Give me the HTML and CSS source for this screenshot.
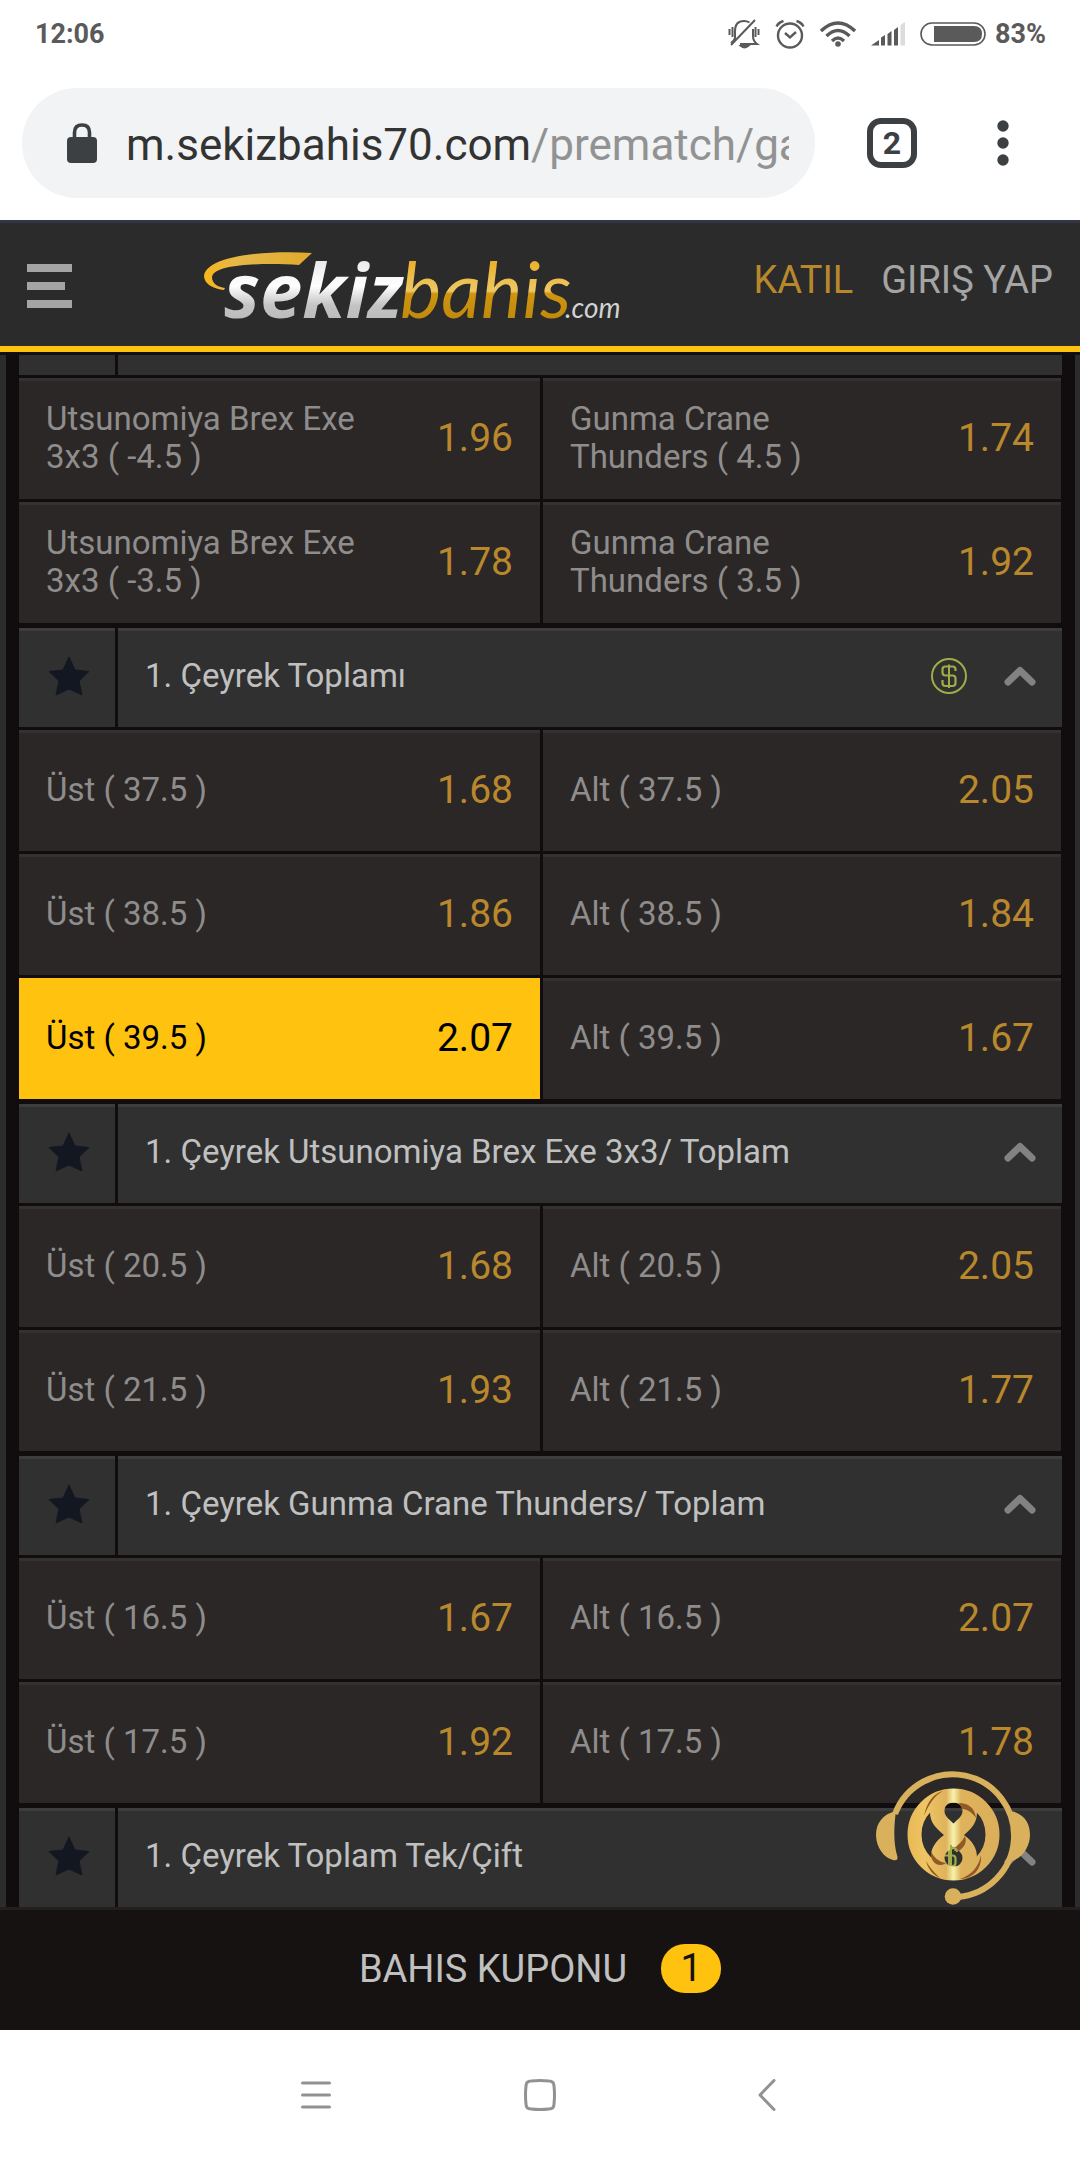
FILE: index.html
```html
<!DOCTYPE html>
<html lang="tr">
<head>
<meta charset="utf-8">
<meta name="viewport" content="width=device-width, initial-scale=1">
<title>sekizbahis.com</title>
<link rel="stylesheet" href="styles.css">
</head>
<body>
<svg class="defs" aria-hidden="true">
  <symbol id="star" viewBox="0 0 42 40"><path d="M21 1 27 14 41 15.500 31 25 34 39 21 33 8 39 11 25 1 15.500 15 14Z" fill="#131722" stroke="#131722" stroke-linejoin="round"/></symbol>
  <symbol id="up" viewBox="0 0 32 20"><path d="M4 16 16 4.500 28 16" fill="none" stroke="#828282" stroke-width="7" stroke-linecap="round" stroke-linejoin="round"/></symbol>
  <symbol id="cash" viewBox="0 0 36 36"><g fill="none" stroke="#a0ac47"><circle cx="18" cy="18" r="17" stroke-width="2"/><path stroke-width="2" d="M18 6.500V30"/><path stroke-width="2.200" d="M24.500 13V11.500Q24.500 8.500 21.500 8.500H14.500Q11.500 8.500 11.500 11.500V14.500Q11.500 17.500 14.500 17.500H21.500Q24.500 17.500 24.500 20.500V25Q24.500 28 21.500 28H14.500Q11.500 28 11.500 25V22"/></g></symbol>
</svg>

<div class="status">
  <span class="status__text">12:06</span>
  <div class="status__icons">
    <svg width="32" height="30" viewBox="0 0 32 30" fill="none" stroke="#5a5a5a" stroke-width="2"><path d="M7 21V12Q7 2 16 2Q19 2 21.500 3.500M12 25H29Q25 22 25 17V10M1.500 10V16M4.500 8V18M27.500 8V18M30.500 10V16M3 26 27 1"/><path d="M3 24Q6 22 7 19"/><path d="M13 27H20Q16.500 30 13 27Z" fill="#5a5a5a"/></svg>
    <svg width="30" height="30" viewBox="0 0 30 30" fill="none" stroke="#5a5a5a" stroke-width="2.400"><circle cx="15" cy="16.500" r="12"/><path d="M10 14 15 18.500 21 13M1.500 7.500Q3.500 3.500 8.500 2M28.500 7.500Q26.500 3.500 21.500 2"/></svg>
    <svg width="36" height="28" viewBox="0 0 36 28" fill="none" stroke="#5a5a5a" stroke-width="3.400"><path d="M1 11Q18-5 35 11M6.500 16Q18 5 29.500 16M12 21Q18 15 24 21"/><circle cx="18" cy="24" r="2.800" fill="#5a5a5a" stroke="none"/></svg>
    <svg width="34" height="24" viewBox="0 0 34 24" fill="#5a5a5a"><path d="M0 23.500 8 18V23.500ZM10 15.500 14 13V23.500H10ZM16.500 12 20.500 9V23.500H16.500ZM23 8 27 5V23.500H23Z"/><path d="M29.500 3 34 0V23.500H29.500Z" fill="#dcdcdc"/></svg>
    <svg class="battery" width="66" height="24" viewBox="0 0 66 24"><rect x="1" y="1" width="64" height="22" rx="11" fill="#fff" stroke="#5a5a5a" stroke-width="1.600"/><path d="M14 4H54Q62 4 62 12T54 20H14Z" fill="#5a5a5a"/></svg>
    <span class="status__text">83%</span>
  </div>
</div>

<div class="browser">
  <button class="address" aria-label="Adres">
    <svg width="30" height="40" viewBox="0 0 30 40"><rect y="14" width="30" height="26" rx="4" fill="#3c4043"/><path d="M7.500 16V9.500Q7.500 2 15 2T22.500 9.500V16" fill="none" stroke="#3c4043" stroke-width="3.600"/></svg>
    <span class="address__url">m.sekizbahis70.com<span class="address__path">/prematch/ga</span></span>
  </button>
  <button class="tabs" aria-label="Sekmeler">2</button>
  <button class="more" aria-label="Menü"><svg width="12" height="46" viewBox="0 0 12 46" fill="#3c4043"><circle cx="6" cy="6" r="5.700"/><circle cx="6" cy="23" r="5.700"/><circle cx="6" cy="40" r="5.700"/></svg></button>
</div>

<header class="site">
  <button class="site__menu" aria-label="Menü"><i></i><i></i><i></i></button>
  <a class="site__logo" href="#" aria-label="sekizbahis.com">
    <svg width="430" height="76" viewBox="0 0 430 76">
      <defs>
        <linearGradient id="silver" gradientUnits="userSpaceOnUse" x1="0" y1="4" x2="0" y2="68"><stop offset="0" stop-color="#e4e4e4"/><stop offset=".5" stop-color="#fff"/><stop offset=".8" stop-color="#c4c4c4"/><stop offset="1" stop-color="#bcbcbc"/></linearGradient>
        <linearGradient id="gold" gradientUnits="userSpaceOnUse" x1="0" y1="4" x2="0" y2="68"><stop offset="0" stop-color="#e9ab1c"/><stop offset=".58" stop-color="#eec765"/><stop offset=".62" stop-color="#cf950f"/><stop offset="1" stop-color="#c08a0c"/></linearGradient>
        <linearGradient id="swoosh" x1="0" x2="1"><stop offset="0" stop-color="#f8b51a"/><stop offset=".3" stop-color="#e5b849"/><stop offset="1" stop-color="#e0a92b"/></linearGradient>
      </defs>
      <path d="M108 3 95 15C65 13 10 13 8 27C8 34 14 37 21 38L20 40C10 39 0 34 0 26C2 6 60 0 108 3Z" fill="url(#swoosh)"/>
      <text class="logo-strong" x="20" y="68" fill="url(#silver)">sekiz</text>
      <text class="logo-light" x="196" y="68" fill="url(#gold)">bahis</text>
      <text class="logo-com" x="361" y="68" fill="#d2d2d2">.com</text>
    </svg>
  </a>
  <nav class="site__links"><a class="site__join" href="#">KATIL</a><a href="#">GIRIŞ YAP</a></nav>
</header>

<main class="market">
  <div class="market__list">
    <section class="group">
      <div class="bar bar--cut"><span class="bar__star"></span><span class="bar__title"></span></div>
      <div class="odds">
        <button class="odd"><span>Utsunomiya Brex Exe 3x3 ( -4.5 )</span><b>1.96</b></button>
        <button class="odd"><span>Gunma Crane Thunders ( 4.5 )</span><b>1.74</b></button>
        <button class="odd"><span>Utsunomiya Brex Exe 3x3 ( -3.5 )</span><b>1.78</b></button>
        <button class="odd"><span>Gunma Crane Thunders ( 3.5 )</span><b>1.92</b></button>
      </div>
    </section>
    <section class="group">
      <div class="bar">
        <button class="bar__star" aria-label="Favori"><svg width="42" height="40"><use href="#star"/></svg></button>
        <button class="bar__title"><span>1. Çeyrek Toplamı</span><svg width="36" height="36"><use href="#cash"/></svg><svg width="32" height="20"><use href="#up"/></svg></button>
      </div>
      <div class="odds">
        <button class="odd"><span>Üst ( 37.5 )</span><b>1.68</b></button>
        <button class="odd"><span>Alt ( 37.5 )</span><b>2.05</b></button>
        <button class="odd"><span>Üst ( 38.5 )</span><b>1.86</b></button>
        <button class="odd"><span>Alt ( 38.5 )</span><b>1.84</b></button>
        <button class="odd odd--picked" aria-pressed="true"><span>Üst ( 39.5 )</span><b>2.07</b></button>
        <button class="odd"><span>Alt ( 39.5 )</span><b>1.67</b></button>
      </div>
    </section>
    <section class="group">
      <div class="bar">
        <button class="bar__star" aria-label="Favori"><svg width="42" height="40"><use href="#star"/></svg></button>
        <button class="bar__title"><span>1. Çeyrek Utsunomiya Brex Exe 3x3/ Toplam</span><svg width="32" height="20"><use href="#up"/></svg></button>
      </div>
      <div class="odds">
        <button class="odd"><span>Üst ( 20.5 )</span><b>1.68</b></button>
        <button class="odd"><span>Alt ( 20.5 )</span><b>2.05</b></button>
        <button class="odd"><span>Üst ( 21.5 )</span><b>1.93</b></button>
        <button class="odd"><span>Alt ( 21.5 )</span><b>1.77</b></button>
      </div>
    </section>
    <section class="group">
      <div class="bar">
        <button class="bar__star" aria-label="Favori"><svg width="42" height="40"><use href="#star"/></svg></button>
        <button class="bar__title"><span>1. Çeyrek Gunma Crane Thunders/ Toplam</span><svg width="32" height="20"><use href="#up"/></svg></button>
      </div>
      <div class="odds">
        <button class="odd"><span>Üst ( 16.5 )</span><b>1.67</b></button>
        <button class="odd"><span>Alt ( 16.5 )</span><b>2.07</b></button>
        <button class="odd"><span>Üst ( 17.5 )</span><b>1.92</b></button>
        <button class="odd"><span>Alt ( 17.5 )</span><b>1.78</b></button>
      </div>
    </section>
    <section class="group">
      <div class="bar">
        <button class="bar__star" aria-label="Favori"><svg width="42" height="40"><use href="#star"/></svg></button>
        <button class="bar__title"><span>1. Çeyrek Toplam Tek/Çift</span><svg width="36" height="36"><use href="#cash"/></svg><svg width="32" height="20"><use href="#up"/></svg></button>
      </div>
    </section>
  </div>
  <button class="support" aria-label="Canlı destek">
    <svg width="154" height="136" viewBox="0 0 154 136">
      <defs>
        <linearGradient id="shine" gradientUnits="userSpaceOnUse" x1="31" y1="0" x2="124" y2="0"><stop offset="0" stop-color="#e8b956"/><stop offset=".2" stop-color="#efc563"/><stop offset=".42" stop-color="#dfb25c"/><stop offset=".5" stop-color="#f7f2ab"/><stop offset=".58" stop-color="#dfb25c"/><stop offset="1" stop-color="#dbae5a"/></linearGradient>
      </defs>
      <path d="M19 43A61.500 61.500 0 1 1 82 126" fill="none" stroke="#d9b15c" stroke-width="6"/>
      <circle cx="77" cy="125.500" r="8.300" fill="#d9b15c"/>
      <path d="M20 40C7 43 0 52 0 64S8 87 17 89Q22 90 21.500 86C17 72 18 54 20 40ZM135 40C148 43 154 52 154 64S146 87 136 90C137 72 137 55 135 40Z" fill="#d9b15c"/>
      <circle cx="77.500" cy="63.500" r="39" fill="none" stroke="url(#shine)" stroke-width="14"/>
      <path d="M77.500 18.500C62 18.500 54 29 54 41C54 52 60 57 68 64C60 70 55 76 55 87C55 100 65 108.500 77.500 108.500S101 100 101 87C101 76 96 70 88 64C96 57 101 52 101 41C101 29 93 18.500 77.500 18.500ZM77.500 31.500C83 31.500 86.500 35 86.500 40S82 48 77.500 52.500C73 48 68.500 45 68.500 40S72 31.500 77.500 31.500ZM77.500 78A9 9 0 1 1 77.500 96A9 9 0 1 1 77.500 78Z" fill="url(#shine)" fill-rule="evenodd"/>
      <g fill="#8f5a25"><path d="M67 20C57 23 51 31 48 45C53 33 58 25 67 20ZM83 32C92 32 99 37 100 47C95 40 90 38 86 38ZM89 65C86 71 82 74 77 78L83 80C89 75 91 71 89 65ZM55 80C58 87 63 91 70 92C63 97 57 92 55 86ZM105 84C103 95 96 104 84 108C97 108 106 98 105 84ZM50 90C52 98 57 104 64 107C58 101 53 96 50 90Z"/></g>
      <path d="M75 74V94M81 81Q81 76.500 75 76.500" fill="none" stroke="#a0ac47" stroke-width="2"/>
    </svg>
  </button>
</main>

<button class="coupon"><span>BAHIS KUPONU</span><span class="coupon__count">1</span></button>

<nav class="system">
  <button aria-label="Son uygulamalar"><svg width="30" height="32" viewBox="0 0 30 32" fill="none" stroke="#929292" stroke-width="3" stroke-linecap="round"><path d="M1.500 4H28.500M1.500 16H28.500M1.500 28H28.500"/></svg></button>
  <button aria-label="Ana ekran"><svg width="32" height="32" viewBox="0 0 32 32"><path d="M7 2Q16 1 25 2Q30 2 30 7Q31 16 30 25Q30 30 25 30Q16 31 7 30Q2 30 2 25Q1 16 2 7Q2 2 7 2Z" fill="none" stroke="#929292" stroke-width="3"/></svg></button>
  <button aria-label="Geri"><svg width="24" height="32" viewBox="0 0 24 32"><path d="M22 1.500 8 16 22 30.500" fill="none" stroke="#929292" stroke-width="3" stroke-linecap="round" stroke-linejoin="round"/></svg></button>
</nav>
</body>
</html>
```
FILE: styles.css
```css
* { box-sizing: border-box; }

html, body { height: 100%; }

body {
  margin: 0;
  display: flex;
  flex-direction: column;
  background: #fff;
  font-family: Roboto, "Liberation Sans", sans-serif;
}

button {
  margin: 0;
  padding: 0;
  border: 0;
  background: none;
  font: inherit;
  color: inherit;
  text-align: left;
}

a { color: inherit; text-decoration: none; }

svg { display: block; flex: none; }

.defs { position: absolute; width: 0; height: 0; }

/* Phone status bar */
.status {
  flex: none;
  display: flex;
  align-items: center;
  justify-content: space-between;
  height: 66px;
  padding: 2px 34px 0 35px;
}

.status__text {
  color: #5a5a5a;
  font-size: 27px;
  font-weight: 700;
  line-height: 32px;
}

.status__icons { display: flex; align-items: center; gap: 15px; }
.battery { margin-right: -6px; }

/* Browser toolbar */
.browser {
  flex: none;
  display: flex;
  align-items: center;
  height: 154px;
  padding: 0 71px 0 22px;
}

.address {
  flex: 1;
  min-width: 0;
  display: flex;
  align-items: center;
  gap: 29px;
  height: 110px;
  padding: 0 26px 0 45px;
  border-radius: 55px;
  background: #f1f3f4;
}

.address__url {
  flex: 1;
  overflow: hidden;
  padding-top: 4px;
  color: #333;
  font-size: 44px;
  line-height: 56px;
  white-space: nowrap;
}

.address__path { color: #929292; }

.tabs {
  width: 50px;
  height: 50px;
  margin: 0 80px 0 52px;
  border: 6px solid #3c4043;
  border-radius: 14px;
  color: #3c4043;
  font-size: 32px;
  font-weight: 700;
  line-height: 38px;
  text-align: center;
}

/* Site header */
.site {
  flex: none;
  display: flex;
  align-items: center;
  height: 135px;
  padding: 0 27px;
  border-top: 3px solid #303742;
  border-bottom: 3px solid #110f0f;
  box-shadow: inset 0 -6px #ffc20e;
  background: #2b2b2b;
}

.site__menu { display: grid; gap: 10px; width: 45px; padding-bottom: 4px; }
.site__menu i { height: 8px; background: #a4a4a4; }
.site__menu i:nth-child(2) { width: 38px; }
.site__logo { margin-left: 132px; }

.logo-strong { font: italic 700 76px "Open Sans", sans-serif; }
.logo-light { font: italic 400 78px "Liberation Sans Narrow", Lato, sans-serif; }
.logo-com { font: italic 400 28px "Liberation Sans Narrow", Lato, sans-serif; }

.site__links {
  display: flex;
  gap: 28px;
  margin-left: auto;
  padding-bottom: 15px;
  color: #a4a4a4;
  font-size: 38px;
  line-height: 48px;
  white-space: nowrap;
}

.site__join { color: #b9882c; }

.market {
  position: relative;
  flex: 1;
  min-height: 0;
  display: flex;
  flex-direction: column;
  justify-content: flex-end;
  overflow: hidden;
  padding: 0 5px 0 6px;
  background: #2c2c2c;
}

.market__list {
  display: grid;
  gap: 5px;
  padding: 0 13px;
  background: #110d0e;
}

.group { display: grid; gap: 3px; }

.bar { display: flex; gap: 3px; height: 99px; }
.bar--cut { height: 20px; }

.bar__star,
.bar__title {
  display: flex;
  align-items: center;
  padding-bottom: 3px;
  background: #303030;
  box-shadow: inset 0 3px #3d3d3d;
}

.bar--cut > * { box-shadow: none; }

.bar__star { justify-content: center; flex: none; width: 96px; padding-left: 3px; }

.bar__title {
  flex: 1;
  gap: 37px;
  padding-right: 26px;
  padding-left: 27px;
  color: #c0c0c0;
  font-size: 33px;
  line-height: 38px;
}

.bar__title span { flex: 1; }

.odds {
  display: grid;
  grid-template-columns: 521fr 518fr;
  gap: 3px;
  padding-right: 1px;
}

.odd {
  display: flex;
  align-items: center;
  justify-content: space-between;
  height: 121px;
  padding: 0 27px 2px;
  background: #2b2726;
  box-shadow: inset 0 3px #353130;
  color: #8f8d8c;
  font-size: 33px;
  line-height: 38px;
}

.odd span { max-width: 325px; }

.odd b {
  color: #b9882c;
  font-size: 39px;
  font-weight: 400;
}

.odd--picked { background: #ffc20e; box-shadow: none; color: #000; }
.odd--picked b { color: #000; }

.support { position: absolute; right: 50px; bottom: 0; }

/* Coupon bar */
.coupon {
  flex: none;
  display: flex;
  align-items: center;
  justify-content: center;
  gap: 34px;
  height: 123px;
  padding-bottom: 3px;
  border-top: 3px solid #221f1e;
  background: #161211;
  color: #c0c0c0;
  font-size: 38px;
  line-height: 48px;
}

.coupon__count {
  width: 60px;
  height: 49px;
  border-radius: 24px;
  background: #ffc20e;
  color: #161211;
  text-align: center;
}

/* Phone navigation */
.system {
  flex: none;
  display: flex;
  justify-content: center;
  height: 130px;
}

.system button {
  display: flex;
  align-items: center;
  justify-content: center;
  width: 224px;
}
```
